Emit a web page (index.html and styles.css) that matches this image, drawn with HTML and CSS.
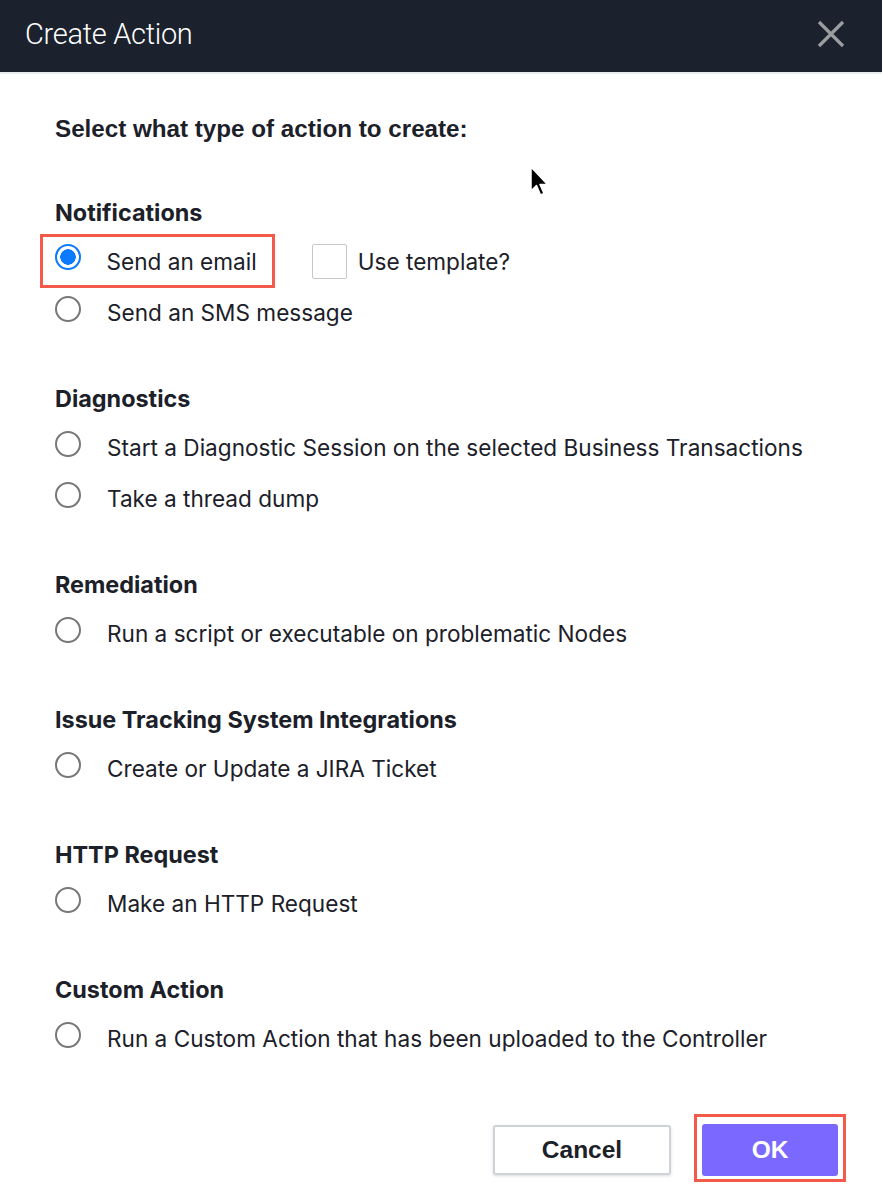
FILE: index.html
```html
<!DOCTYPE html>
<html>
<head>
<meta charset="utf-8">
<link rel="stylesheet" href="styles.css">
</head>
<body>
<div class="dialog">
  <header class="header">
    <h1 class="title">Create Action</h1>
    <svg class="close" width="28" height="28" viewBox="0 0 28 28"><path d="M2 2 L26 26 M26 2 L2 26" stroke="#9b9da0" stroke-width="3.2" fill="none"/></svg>
  </header>
  <main class="content">
    <p class="prompt">Select what type of action to create:</p>

    <section class="group">
      <h2 class="group-title">Notifications</h2>
      <div class="row">
        <span class="highlight"><span class="radio checked"></span><span class="label">Send an email</span></span>
        <span class="check"><span class="box"></span><span class="label">Use template?</span></span>
      </div>
      <div class="row"><span class="radio"></span><span class="label">Send an SMS message</span></div>
    </section>

    <section class="group">
      <h2 class="group-title">Diagnostics</h2>
      <div class="row"><span class="radio"></span><span class="label">Start a Diagnostic Session on the selected Business Transactions</span></div>
      <div class="row"><span class="radio"></span><span class="label">Take a thread dump</span></div>
    </section>

    <section class="group">
      <h2 class="group-title">Remediation</h2>
      <div class="row"><span class="radio"></span><span class="label">Run a script or executable on problematic Nodes</span></div>
    </section>

    <section class="group">
      <h2 class="group-title">Issue Tracking System Integrations</h2>
      <div class="row"><span class="radio"></span><span class="label">Create or Update a JIRA Ticket</span></div>
    </section>

    <section class="group">
      <h2 class="group-title">HTTP Request</h2>
      <div class="row"><span class="radio"></span><span class="label">Make an HTTP Request</span></div>
    </section>

    <section class="group">
      <h2 class="group-title">Custom Action</h2>
      <div class="row"><span class="radio"></span><span class="label">Run a Custom Action that has been uploaded to the Controller</span></div>
    </section>
  </main>
  <footer class="footer">
    <button class="btn cancel">Cancel</button>
    <span class="ok-wrap"><button class="btn ok">OK</button></span>
  </footer>
  <svg class="cursor" width="22" height="34" viewBox="0 0 22 34"><path d="M1 1 L1 25 L6.5 19.5 L10.5 29 L14 27.5 L10 18.5 L17.5 18.5 Z" fill="#000" stroke="#fff" stroke-width="1.5" stroke-linejoin="round"/></svg>
</div>
</body>
</html>
```
FILE: styles.css
```css
* { box-sizing: border-box; }
html, body { margin: 0; padding: 0; background: #fff; }
body { width: 882px; height: 1202px; overflow: hidden; }
.dialog { position: relative; width: 882px; height: 1202px; font-family: Inter, "Noto Sans", sans-serif; color: #1c2029; }
.header {
  height: 74px;
  background: #1c222d;
  border-bottom: 2px solid #e9ecef;
  display: flex;
  align-items: center;
  justify-content: space-between;
  padding: 0 37px 5px 25px;
}
.title {
  margin: 0;
  font-family: Roboto, "Liberation Sans", sans-serif;
  font-weight: 300;
  font-size: 29px;
  color: #fff;
  letter-spacing: -0.3px;
}
.close { display: block; margin-top: 0; }
.content { padding: 40px 0 0 55px; }
.prompt {
  margin: 0 0 52px;
  font-family: "Liberation Sans", Arial, sans-serif;
  font-weight: 700;
  font-size: 24.2px;
  line-height: 30px;
}
.group + .group { margin-top: 44px; }
.group-title {
  margin: 0 0 6px;
  font-size: 23.4px;
  font-weight: 700;
  line-height: 34px;
}
.row { height: 51px; display: flex; align-items: center; font-size: 22.6px; }
.label { margin-left: 26px; white-space: nowrap; }
.radio {
  width: 26px; height: 26px; border-radius: 50%;
  border: 2px solid #777;
  flex: none;
  margin-top: -8px;
}
.radio.checked {
  border: 2px solid #0a7bff;
  background: radial-gradient(circle, #0a7bff 0 7.5px, #fff 8px);
}
.highlight {
  display: flex; align-items: center;
  margin-left: -15px;
  height: 54px;
  border: 3.5px solid #f35a4a;
  padding: 0 15px 0 11.5px;
  margin-top: -1px;
}
.check { display: flex; align-items: center; margin-left: 37px; }
.box { width: 35px; height: 35px; border: 1.5px solid #c6c8cb; border-radius: 2px; }
.check .label { margin-left: 11px; }
.footer {
  position: absolute; left: 0; right: 0; top: 1114px;
  display: flex; justify-content: flex-end; align-items: flex-start;
  padding-right: 36px;
}
.btn {
  font-family: "Liberation Sans", Arial, sans-serif;
  font-weight: 700;
  font-size: 24.5px;
  border-radius: 3px;
  cursor: pointer;
}
.cancel {
  width: 178px; height: 50px;
  margin-top: 11px;
  background: #fff;
  border: 2px solid #cfd2d6;
  box-shadow: 0 1px 3px rgba(0,0,0,0.15);
  color: #1c2029;
  margin-right: 23px;
}
.ok-wrap { display: block; border: 3.5px solid #f35a4a; padding: 7px 5px 3px 5px; }
.ok {
  display: block;
  width: 136px; height: 52px;
  background: #7b69ff;
  color: #fff;
  border: none;
}
.cursor { position: absolute; left: 530px; top: 166px; }
```
